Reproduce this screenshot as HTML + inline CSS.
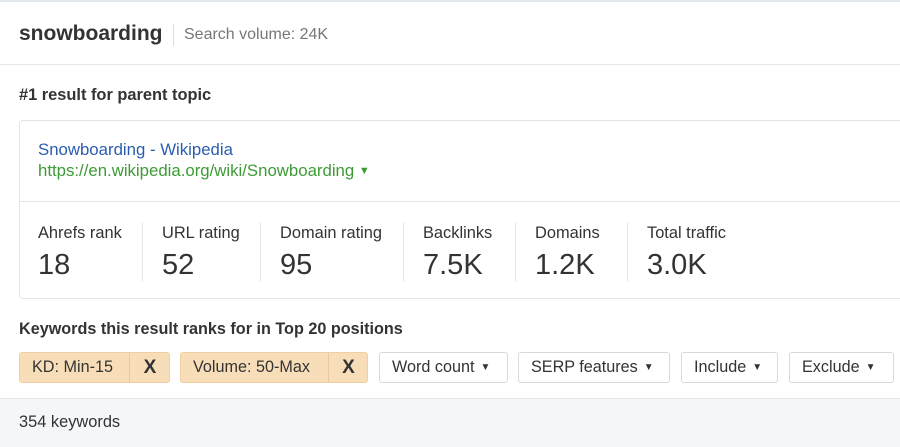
<!DOCTYPE html><html><head><style>
*{margin:0;padding:0;box-sizing:border-box}
body{width:900px;height:447px;overflow:hidden;background:#fff;font-family:"Liberation Sans",Arial,sans-serif;position:relative;color:#333}
.a{position:absolute;white-space:nowrap}
.chip{position:absolute;top:352px;height:31px;border:1px solid #d9d9d9;border-radius:3px;font-size:16.2px;line-height:29px;color:#333;padding-left:12px;background:#fff}
.chip.o{background:#f8deb8;border-color:#efcfa3}
.x{position:absolute;top:0;bottom:0;border-left:1px solid #e8c89b;text-align:center;font-size:19px;font-weight:bold}
.tri{font-size:10px;margin-left:6px;vertical-align:2px}
.st{position:absolute;top:222px;height:60px;border-left:1px solid #e6e6e6}
.st .l{position:absolute;left:19px;top:2px;font-size:16.4px;color:#333;white-space:nowrap}
.st .v{position:absolute;left:19px;top:27px;font-size:29px;color:#333;white-space:nowrap}
</style></head><body>
<div class="a" style="left:0;top:0;width:900px;height:2px;background:#e3e8ec"></div>
<div class="a" style="left:19px;top:22px;font-size:21px;font-weight:bold;color:#333">snowboarding</div>
<div class="a" style="left:173px;top:24px;width:1px;height:22px;background:#ddd"></div>
<div class="a" style="left:184px;top:26px;font-size:16px;color:#777">Search volume: 24K</div>
<div class="a" style="left:0;top:64px;width:900px;height:1px;background:#e6e6e6"></div>
<div class="a" style="left:19px;top:86px;font-size:16.4px;font-weight:bold;color:#333">#1 result for parent topic</div>
<div class="a" style="left:19px;top:120px;width:900px;height:179px;border:1px solid #e3e3e3;border-radius:4px"></div>
<div class="a" style="left:38px;top:140px;font-size:16.8px;color:#2a5db0">Snowboarding - Wikipedia</div>
<div class="a" style="left:38px;top:161px;font-size:16.8px;color:#3d9b35">https://en.wikipedia.org/wiki/Snowboarding <span style="font-size:11px;vertical-align:2px">▼</span></div>
<div class="a" style="left:20px;top:201px;width:880px;height:1px;background:#e6e6e6"></div>
<div class="st" style="left:19px;border:none"><div class="l">Ahrefs rank</div><div class="v">18</div></div>
<div class="st" style="left:142px"><div class="l">URL rating</div><div class="v">52</div></div>
<div class="st" style="left:260px"><div class="l">Domain rating</div><div class="v">95</div></div>
<div class="st" style="left:403px"><div class="l">Backlinks</div><div class="v">7.5K</div></div>
<div class="st" style="left:515px"><div class="l">Domains</div><div class="v">1.2K</div></div>
<div class="st" style="left:627px"><div class="l">Total traffic</div><div class="v">3.0K</div></div>
<div class="a" style="left:19px;top:320px;font-size:16.2px;font-weight:bold;color:#333">Keywords this result ranks for in Top 20 positions</div>
<div class="chip o" style="left:19px;width:151px">KD: Min-15<div class="x" style="left:109px;width:41px">X</div></div>
<div class="chip o" style="left:180px;width:188px">Volume: 50-Max<div class="x" style="left:147px;width:40px">X</div></div>
<div class="chip" style="left:379px;width:129px">Word count<span class="tri">▼</span></div>
<div class="chip" style="left:518px;width:152px">SERP features<span class="tri">▼</span></div>
<div class="chip" style="left:681px;width:97px">Include<span class="tri">▼</span></div>
<div class="chip" style="left:789px;width:105px">Exclude<span class="tri">▼</span></div>
<div class="a" style="left:0;top:398px;width:900px;height:49px;background:#f4f6f8;border-top:1px solid #e6e9ec"></div>
<div class="a" style="left:19px;top:413px;font-size:16.4px;color:#333">354 keywords</div>
</body></html>
